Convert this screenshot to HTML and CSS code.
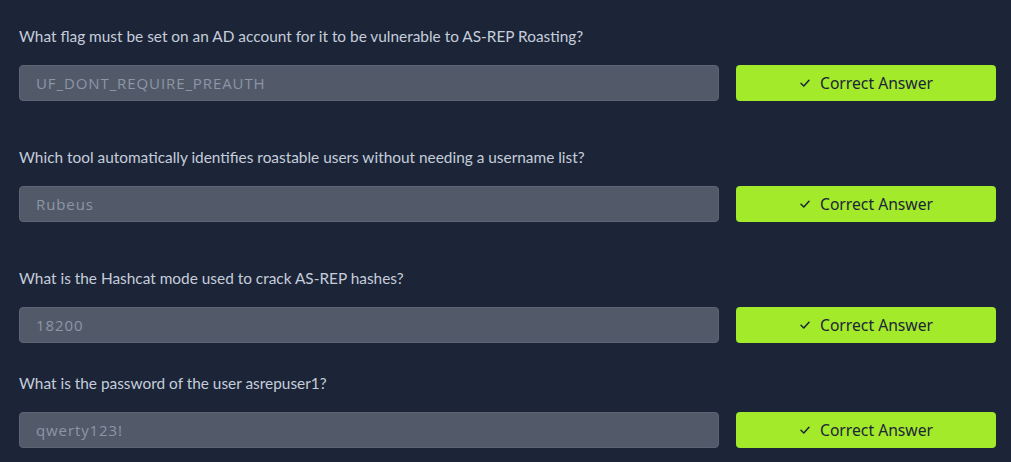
FILE: index.html
```html
<!DOCTYPE html>
<html>
<head>
<meta charset="utf-8">
<link rel="stylesheet" href="styles.css">
</head>
<body>
<div class="questions">
  <div class="q">
    <p class="q-text">What flag must be set on an AD account for it to be vulnerable to AS-REP Roasting?</p>
    <div class="q-row">
      <div class="answer">UF_DONT_REQUIRE_PREAUTH</div>
      <button class="btn"><svg class="check" viewBox="0 0 12 12" width="12" height="12"><path d="M2 6.3 L4.8 9 L10 3.2" fill="none" stroke="currentColor" stroke-width="1.5" stroke-linecap="round" stroke-linejoin="round"/></svg>Correct Answer</button>
    </div>
  </div>
  <div class="q">
    <p class="q-text">Which tool automatically identifies roastable users without needing a username list?</p>
    <div class="q-row">
      <div class="answer">Rubeus</div>
      <button class="btn"><svg class="check" viewBox="0 0 12 12" width="12" height="12"><path d="M2 6.3 L4.8 9 L10 3.2" fill="none" stroke="currentColor" stroke-width="1.5" stroke-linecap="round" stroke-linejoin="round"/></svg>Correct Answer</button>
    </div>
  </div>
  <div class="q">
    <p class="q-text">What is the Hashcat mode used to crack AS-REP hashes?</p>
    <div class="q-row">
      <div class="answer">18200</div>
      <button class="btn"><svg class="check" viewBox="0 0 12 12" width="12" height="12"><path d="M2 6.3 L4.8 9 L10 3.2" fill="none" stroke="currentColor" stroke-width="1.5" stroke-linecap="round" stroke-linejoin="round"/></svg>Correct Answer</button>
    </div>
  </div>
  <div class="q q-last">
    <p class="q-text">What is the password of the user asrepuser1?</p>
    <div class="q-row">
      <div class="answer">qwerty123!</div>
      <button class="btn"><svg class="check" viewBox="0 0 12 12" width="12" height="12"><path d="M2 6.3 L4.8 9 L10 3.2" fill="none" stroke="currentColor" stroke-width="1.5" stroke-linecap="round" stroke-linejoin="round"/></svg>Correct Answer</button>
    </div>
  </div>
</div>
</body>
</html>
```
FILE: styles.css
```css
html, body {
  margin: 0;
  padding: 0;
  background: #1c2538;
}
body {
  width: 1011px;
  height: 462px;
  overflow: hidden;
}
.questions {
  padding: 26px 16px 0 19px;
  display: flex;
  flex-direction: column;
}
.q {
  margin-bottom: 46px;
}
.q:nth-child(3) {
  margin-bottom: 30px;
}
.q-last {
  margin-bottom: 0;
}
.q-text {
  margin: 0 0 19px 0;
  font-family: "Lato", sans-serif;
  font-size: 15.4px;
  line-height: 20px;
  color: #c5cdda;
}
.q-row {
  display: flex;
  gap: 17px;
  height: 36px;
}
.answer {
  flex: 0 0 700px;
  box-sizing: border-box;
  background: #525a69;
  border: 1px solid #5d6575;
  border-radius: 4px;
  padding: 0 16px;
  display: flex;
  align-items: center;
  font-family: "Open Sans", sans-serif;
  font-size: 15px;
  letter-spacing: 0.9px;
  color: #8c96a6;
}
.btn {
  flex: 0 0 260px;
  height: 36px;
  border: none;
  border-radius: 4px;
  background: #a3ea2a;
  color: #1c2538;
  font-family: "Noto Sans", sans-serif;
  font-size: 15.7px;
  display: flex;
  align-items: center;
  justify-content: center;
  gap: 9px;
  padding: 0;
}
.check {
  display: block;
}
```
